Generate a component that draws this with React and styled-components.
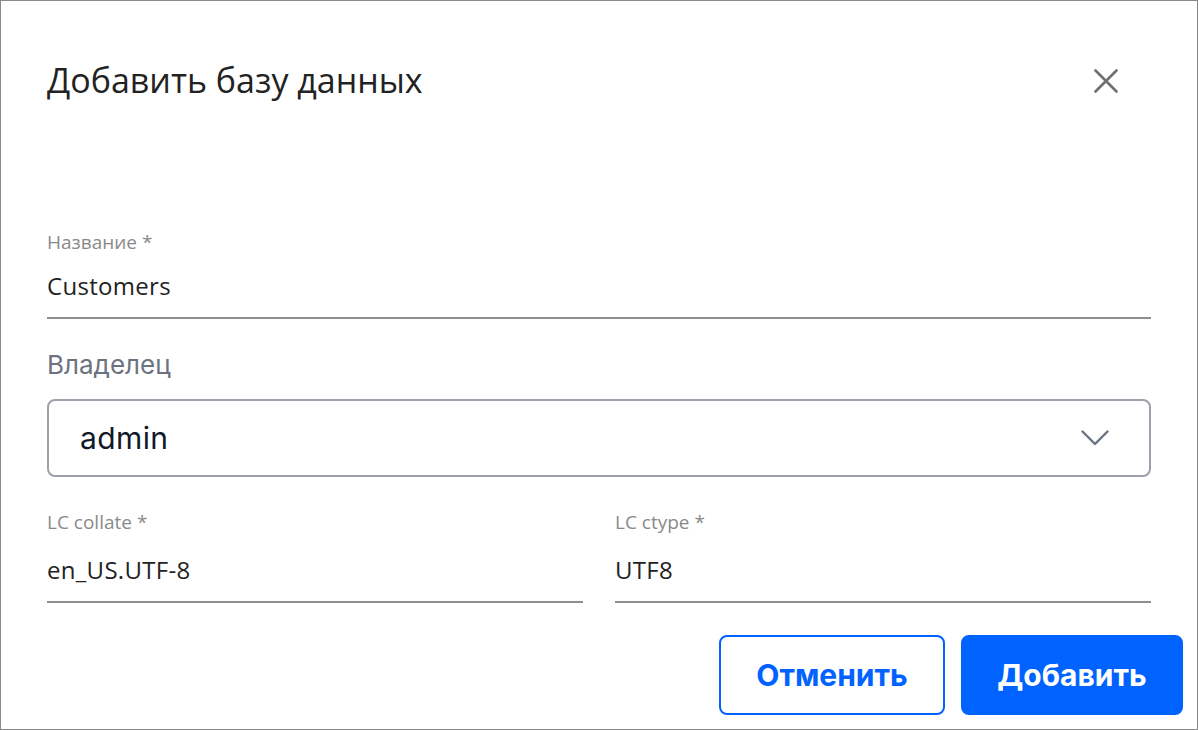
import React from 'react'
import styled, { createGlobalStyle } from 'styled-components'

const GlobalStyle = createGlobalStyle`
  html, body {
    margin: 0;
    padding: 0;
    background: #ffffff;
  }
  * {
    box-sizing: border-box;
  }
`

const Dialog = styled.section`
  width: 1198px;
  height: 730px;
  border: 1px solid #8a8a8a;
  background: #ffffff;
  padding: 0 46px;
  display: flex;
  flex-direction: column;
  font-family: 'Open Sans', 'Noto Sans', sans-serif;
`
const Header = styled.header`
  display: flex;
  align-items: center;
  justify-content: space-between;
  height: 40px;
  margin-top: 59px;
`
const Title = styled.h1`
  margin: 0;
  font-size: 34px;
  font-weight: 400;
  color: #222222;
  line-height: 40px;
`
const Close = styled.button`
  width: 24px;
  height: 24px;
  margin-right: 33px;
  margin-top: 2px;
  padding: 0;
  border: none;
  background: none;
  display: flex;
  cursor: pointer;
`
const Body = styled.div`
  display: flex;
  flex-direction: column;
  margin-top: 130px;
`
const Row = styled.div`
  display: grid;
  grid-template-columns: 1fr 1fr;
  gap: 32px;
`
const Field = styled.label`
  display: flex;
  flex-direction: column;
  border-bottom: 2px solid #8e8e8e;
  margin-bottom: ${(p) => p.$mb || 0}px;
`
const Label = styled.span`
  font-size: 19px;
  line-height: 24px;
  color: #8a8a8a;
`
const Value = styled.span`
  font-size: 24px;
  letter-spacing: 0.3px;
  line-height: 32px;
  color: #222222;
  margin-top: ${(p) => p.$mt || 16}px;
  padding-bottom: 15px;
`
const OwnerLabel = styled.span`
  font-family: Inter, sans-serif;
  font-size: 26px;
  line-height: 32px;
  color: #6b7280;
`
const Select = styled.div`
  display: flex;
  align-items: center;
  justify-content: space-between;
  height: 78px;
  margin-top: 18px;
  margin-bottom: 33px;
  padding: 0 40px 0 31px;
  border: 2px solid #9ca0aa;
  border-radius: 8px;
  font-family: Inter, sans-serif;
  font-size: 30px;
  letter-spacing: 0.4px;
  color: #111827;
`
const Footer = styled.footer`
  display: flex;
  justify-content: flex-end;
  gap: 16px;
  margin-top: 32px;
  margin-right: -32px;
`
const Button = styled.button`
  height: 80px;
  width: ${(p) => p.$w}px;
  border-radius: 8px;
  border: 2px solid #0062ff;
  background: ${(p) => (p.$primary ? '#0062ff' : '#ffffff')};
  color: ${(p) => (p.$primary ? '#ffffff' : '#0062ff')};
  font-family: Inter, sans-serif;
  font-weight: 700;
  font-size: 30px;
  cursor: pointer;
`

export default function App() {
  return (
    <>
      <GlobalStyle />
      <Dialog>
        <Header>
          <Title>Добавить базу данных</Title>
          <Close aria-label="Закрыть">
            <svg width="24" height="24" viewBox="0 0 24 24" fill="none" stroke="#6f6f6f" strokeWidth="2.6" strokeLinecap="round">
              <path d="M1.5 1.5l21 21M22.5 1.5l-21 21" />
            </svg>
          </Close>
        </Header>
        <Body>
          <Field $mb={30}>
            <Label>Название *</Label>
            <Value $mt={16}>Customers</Value>
          </Field>
          <OwnerLabel>Владелец</OwnerLabel>
          <Select>
            <span>admin</span>
            <svg width="28" height="16" viewBox="0 0 28 16" fill="none" stroke="#6b7280" strokeWidth="2.4" strokeLinecap="round" strokeLinejoin="round">
              <path d="M1.5 1.5L14 14 26.5 1.5" />
            </svg>
          </Select>
          <Row>
            <Field>
              <Label>LC collate *</Label>
              <Value $mt={20}>en_US.UTF-8</Value>
            </Field>
            <Field>
              <Label>LC ctype *</Label>
              <Value $mt={20}>UTF8</Value>
            </Field>
          </Row>
        </Body>
        <Footer>
          <Button $w={226}>Отменить</Button>
          <Button $w={222} $primary>Добавить</Button>
        </Footer>
      </Dialog>
    </>
  )
}
